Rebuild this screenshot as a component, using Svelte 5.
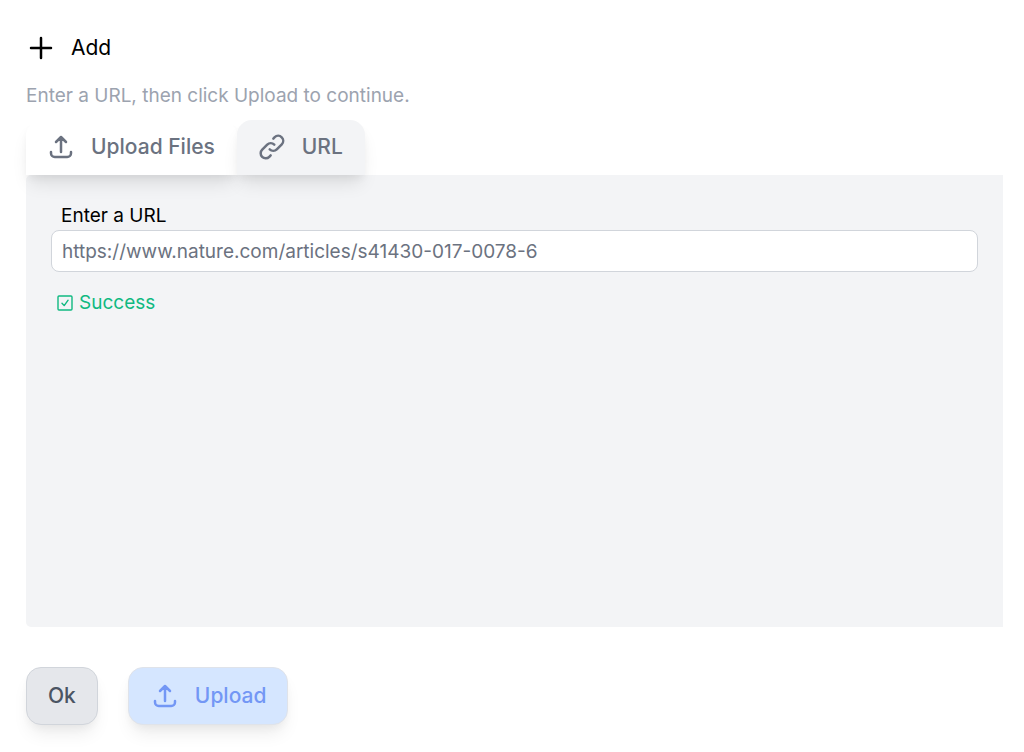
<script>
  let url = $state('https://www.nature.com/articles/s41430-017-0078-6');
  let tab = $state('url');
</script>

{#snippet uploadIcon()}
  <svg class="icon" viewBox="0 0 24 24" aria-hidden="true">
    <path d="M4 16v1a3 3 0 003 3h10a3 3 0 003-3v-1m-4-8l-4-4m0 0L8 8m4-4v12" />
  </svg>
{/snippet}

<main>
  <h1>
    <svg class="icon" viewBox="0 0 24 24" aria-hidden="true">
      <path d="M12 4v16m8-8H4" />
    </svg>
    <span>Add</span>
  </h1>
  <p class="hint">Enter a URL, then click Upload to continue.</p>

  <div class="tabs" role="tablist">
    <button class="tab" class:active={tab === 'files'} role="tab" aria-selected={tab === 'files'} onclick={() => (tab = 'files')}>
      {@render uploadIcon()}
      <span>Upload Files</span>
    </button>
    <button class="tab" class:active={tab === 'url'} role="tab" aria-selected={tab === 'url'} onclick={() => (tab = 'url')}>
      <svg class="icon" viewBox="0 0 24 24" aria-hidden="true">
        <path d="M13.828 10.172a4 4 0 00-5.656 0l-4 4a4 4 0 105.656 5.656l1.102-1.101m-.758-4.899a4 4 0 005.656 0l4-4a4 4 0 00-5.656-5.656l-1.1 1.1" />
      </svg>
      <span>URL</span>
    </button>
  </div>

  <section class="panel">
    <label for="url">Enter a URL</label>
    <input id="url" type="url" bind:value={url} />
    <p class="status">
      <svg viewBox="0 0 16 16" aria-hidden="true">
        <rect x="1" y="1" width="14" height="14" rx="1" />
        <path d="M5 8.2l2.2 2.4 3.9-5.4" />
      </svg>
      <span>Success</span>
    </p>
  </section>

  <div class="actions">
    <button class="button ok">Ok</button>
    <button class="button upload">
      {@render uploadIcon()}
      <span>Upload</span>
    </button>
  </div>
</main>

<style>
  :global(body) {
    background: #fff;
  }

  main {
    box-sizing: border-box;
    min-height: 100vh;
    padding: 33px 21px 27px 26px;
    display: flex;
    flex-direction: column;
    color: #000;
    font-family: Inter, 'Liberation Sans', sans-serif;
    font-size: 19px;
    line-height: 30px;
  }

  h1,
  p {
    margin: 0;
  }

  button,
  input {
    font: inherit;
  }

  button {
    cursor: pointer;
  }

  svg {
    flex: none;
    fill: none;
    stroke: currentColor;
    stroke-width: 2;
    stroke-linecap: round;
    stroke-linejoin: round;
  }

  .icon {
    width: 30px;
    height: 30px;
  }

  h1 {
    display: flex;
    align-items: center;
    gap: 15px;
    font-size: 21px;
    font-weight: 400;
  }

  .hint {
    margin-top: 18px;
    color: #9ca3af;
  }

  .tabs {
    position: relative;
    display: flex;
    margin-top: 9px;
  }

  .tab {
    display: flex;
    align-items: center;
    gap: 15px;
    height: 55px;
    padding: 0 22px 1px 20px;
    border: 0;
    border-radius: 15px 15px 0 0;
    background: #fff;
    color: #6b7280;
    font-size: 21px;
    font-weight: 500;
    box-shadow: 0 12px 18px -4px rgb(0 0 0 / 10%), 0 5px 8px -2px rgb(0 0 0 / 5%);
  }

  .tab.active {
    background: #f3f4f6;
  }

  .panel {
    flex: 1;
    padding: 25px;
    border-radius: 5px 0 0 5px;
    background: #f3f4f6;
    display: flex;
    flex-direction: column;
  }

  label {
    padding: 1px 10px 0;
    line-height: 29px;
  }

  input {
    box-sizing: border-box;
    width: 100%;
    height: 42px;
    padding: 0 10px;
    border: 1px solid #d1d5db;
    border-radius: 8px;
    background: #fff;
    color: #6b7280;
  }

  .status {
    display: flex;
    align-items: center;
    gap: 6px;
    margin-top: 16px;
    padding: 0 6px;
    color: #10b981;
  }

  .status svg {
    width: 16px;
    height: 16px;
    stroke-width: 1.4;
  }

  .actions {
    display: flex;
    gap: 30px;
    margin-top: 40px;
  }

  .button {
    display: flex;
    align-items: center;
    gap: 15px;
    height: 58px;
    padding: 0 21px;
    border: 1px solid #d1d5db;
    border-radius: 15px;
    font-size: 21px;
    font-weight: 500;
    box-shadow: 0 12px 18px -4px rgb(0 0 0 / 8%), 0 5px 8px -2px rgb(0 0 0 / 4%);
  }

  .ok {
    background: #e5e7eb;
    color: #4b5563;
  }

  .upload {
    border-color: #dfe3ea;
    background: #d5e6ff;
    color: #7397f5;
  }
</style>
